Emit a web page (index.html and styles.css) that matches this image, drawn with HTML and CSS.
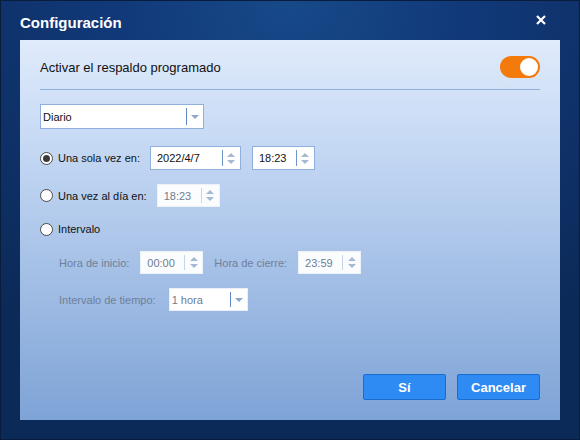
FILE: index.html
```html
<!DOCTYPE html>
<html lang="es">
<head>
  <meta charset="UTF-8">
  <title>Configuración</title>
  <link rel="stylesheet" href="styles.css">
</head>
<body>
  <div class="window">
    <div class="titlebar">
      <h1>Configuración</h1>
      <svg class="close" width="10" height="10" viewBox="0 0 10 10">
        <path d="M1 1L9 9M9 1L1 9" stroke="#fff" stroke-width="2.2" />
      </svg>
    </div>

    <div class="panel">
      <div class="header">
        <span>Activar el respaldo programado</span>
        <div class="toggle"><div class="knob"></div></div>
      </div>

      <div class="body">
        <div class="select select-freq">
          <span class="select-value">Diario</span>
          <span class="select-btn"><i class="down"></i></span>
        </div>

        <div class="row row-once">
          <label class="radio"><span class="dot checked"></span>Una sola vez en:</label>
          <div class="spin spin-date">
            <span class="spin-value">2022/4/7</span>
            <span class="spin-btns"><i class="up"></i><i class="down"></i></span>
          </div>
          <div class="spin spin-time">
            <span class="spin-value">18:23</span>
            <span class="spin-btns"><i class="up"></i><i class="down"></i></span>
          </div>
        </div>

        <div class="row row-daily">
          <label class="radio"><span class="dot"></span>Una vez al día en:</label>
          <div class="spin spin-time disabled">
            <span class="spin-value">18:23</span>
            <span class="spin-btns"><i class="up"></i><i class="down"></i></span>
          </div>
        </div>

        <div class="row row-interval">
          <label class="radio"><span class="dot"></span>Intervalo</label>
        </div>

        <div class="sub sub-hours">
          <span class="muted">Hora de inicio:</span>
          <div class="spin spin-time disabled">
            <span class="spin-value">00:00</span>
            <span class="spin-btns"><i class="up"></i><i class="down"></i></span>
          </div>
          <span class="muted">Hora de cierre:</span>
          <div class="spin spin-time disabled">
            <span class="spin-value">23:59</span>
            <span class="spin-btns"><i class="up"></i><i class="down"></i></span>
          </div>
        </div>

        <div class="sub sub-step">
          <span class="muted">Intervalo de tiempo:</span>
          <div class="select select-step disabled">
            <span class="select-value">1 hora</span>
            <span class="select-btn"><i class="down"></i></span>
          </div>
        </div>
      </div>

      <div class="footer">
        <button class="btn">Sí</button>
        <button class="btn">Cancelar</button>
      </div>
    </div>
  </div>
</body>
</html>
```

FILE: styles.css
```css
* {
  box-sizing: border-box;
  margin: 0;
  padding: 0;
}

body {
  font-family: "Liberation Sans", Arial, sans-serif;
  width: 580px;
  height: 440px;
  overflow: hidden;
}

.window {
  width: 580px;
  height: 440px;
  border: 1px solid #081d3b;
  padding: 0 19px 19px 19px;
  display: flex;
  flex-direction: column;
  background: radial-gradient(ellipse 75% 90% at 50% 0%, #174988 0%, #11397a 40%, #0c2a58 100%);
}

.titlebar {
  height: 39px;
  display: flex;
  align-items: center;
  justify-content: space-between;
  padding-top: 4px;
}

.titlebar h1 {
  color: #fff;
  font-size: 15px;
  font-weight: bold;
}

.close {
  margin-right: 14px;
  margin-top: -6px;
}

.panel {
  flex: 1;
  display: flex;
  flex-direction: column;
  padding: 16px 20px 20px 20px;
  background: linear-gradient(to bottom, #e0ebfb 0%, #c3d7f3 30%, #7ea3d6 100%);
}

/* header with toggle */
.header {
  display: flex;
  align-items: center;
  justify-content: space-between;
  padding-bottom: 11px;
  border-bottom: 1px solid #8db0e0;
  font-size: 13px;
  color: #111;
}

.toggle {
  width: 40px;
  height: 22px;
  border-radius: 11px;
  background: #f57a0c;
  display: flex;
  justify-content: flex-end;
  align-items: center;
  padding: 0 2px;
}

.knob {
  width: 18px;
  height: 18px;
  border-radius: 50%;
  background: #fff;
}

.body {
  font-size: 11px;
  color: #111;
}

/* select boxes */
.select {
  display: flex;
  background: #fff;
  border: 1px solid #8fb0dd;
}

.select-freq {
  width: 164px;
  height: 25px;
  margin-top: 14px;
}

.select-step {
  width: 79px;
  height: 23px;
}

.select-value {
  flex: 1;
  display: flex;
  align-items: center;
  padding-left: 2px;
}

.select-btn {
  width: 17px;
  margin: 3px 0;
  border-left: 1px solid #5e86c2;
  display: flex;
  align-items: center;
  justify-content: center;
}

/* spin boxes */
.spin {
  display: flex;
  background: #fff;
  border: 1px solid #8fb0dd;
  height: 24px;
}

.spin-date { width: 91px; }
.spin-time { width: 63px; }

.spin-value {
  flex: 1;
  display: flex;
  align-items: center;
  padding-left: 6px;
}

.spin-btns {
  width: 18px;
  margin: 3px 0;
  border-left: 1px solid #6f95c8;
  display: flex;
  flex-direction: column;
  align-items: center;
  justify-content: center;
  gap: 3px;
}

.up, .down {
  display: block;
  width: 0;
  height: 0;
  border-left: 4px solid transparent;
  border-right: 4px solid transparent;
}

.up { border-bottom: 4px solid #a5b9d3; }
.down { border-top: 4px solid #a5b9d3; }
.select-btn .down { border-top-color: #8ea7c8; }

.disabled {
  border-color: #edf2f9;
  background: #fbfcfe;
  color: #6e7c92;
}

.disabled .spin-btns {
  border-left-color: #c6d4e8;
}

.disabled.select {
  border-color: #e9eff8;
  background: #fff;
}

/* radio rows */
.row {
  display: flex;
  align-items: center;
  gap: 10px;
}

.row-once { margin-top: 17px; }
.row-once .spin-date { margin-right: 1px; }
.row-daily { margin-top: 14px; }
.row-daily .spin { height: 23px; }
.row-interval { margin-top: 10px; height: 24px; }

.radio {
  display: flex;
  align-items: center;
  gap: 5px;
}

.dot {
  width: 13px;
  height: 13px;
  border-radius: 50%;
  border: 1px solid #4a4a4a;
  background: #fff;
  display: flex;
  align-items: center;
  justify-content: center;
}

.dot.checked::after {
  content: "";
  width: 7px;
  height: 7px;
  border-radius: 50%;
  background: #3a3a3a;
}

.sub {
  display: flex;
  align-items: center;
  gap: 11px;
  padding-left: 19px;
}

.sub .spin { height: 23px; }
.sub-hours { margin-top: 10px; }
.sub-step { margin-top: 14px; gap: 13px; }

.muted {
  color: #6f7f99;
}

/* buttons */
.footer {
  margin-top: auto;
  display: flex;
  justify-content: flex-end;
  gap: 11px;
}

.btn {
  width: 83px;
  height: 26px;
  background: #2f8bf4;
  border: 1px solid #1b6ccf;
  border-radius: 2px;
  color: #fff;
  font-family: "Liberation Sans", Arial, sans-serif;
  font-size: 13px;
  font-weight: bold;
}
```
